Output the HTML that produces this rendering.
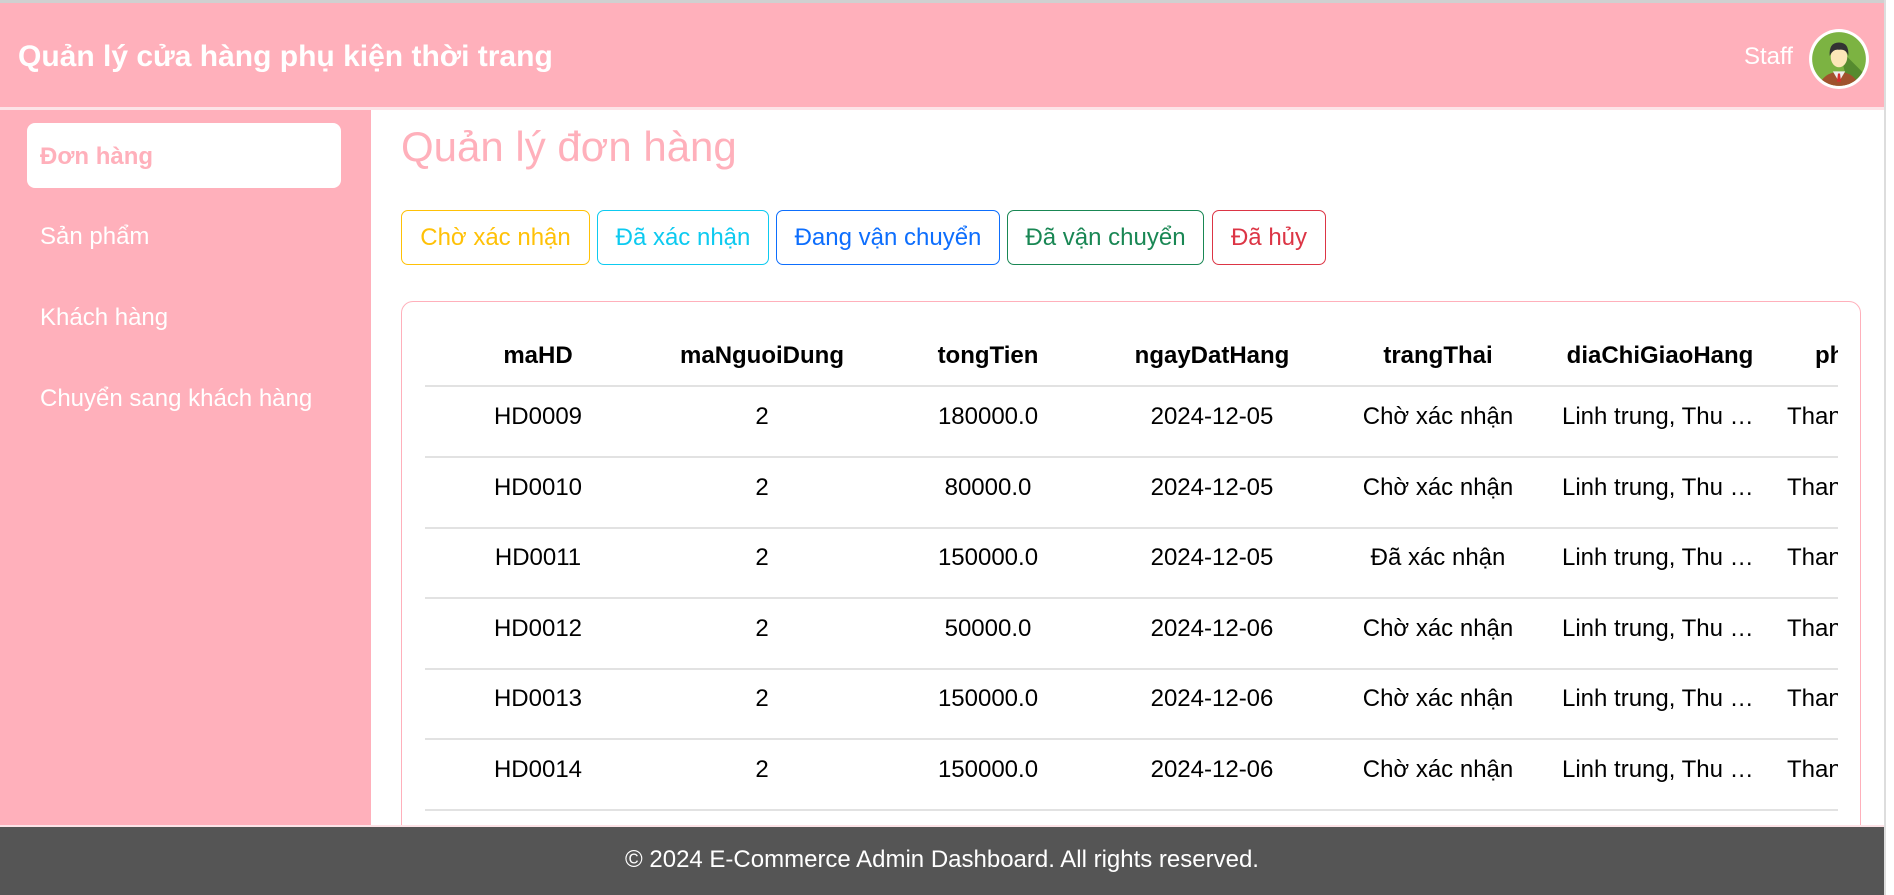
<!DOCTYPE html>
<html><head><meta charset="utf-8"><style>
*{margin:0;padding:0;box-sizing:border-box}
body{width:1894px;height:895px;overflow:hidden;font-family:"Liberation Sans",Arial,sans-serif;background:#fff;position:relative}
.hdr{position:absolute;left:0;top:0;width:1884px;height:107px;background:#ffb0bb;border-top:3px solid #d0d0d0}
.hdr h1{position:absolute;left:18px;top:36px;font-size:30px;color:#fff;font-weight:bold;line-height:36px}
.staff{position:absolute;left:1744px;top:40px;font-size:24px;color:#fff}
.av{position:absolute;left:1808px;top:25px}
.sep{position:absolute;left:0;top:107px;width:1884px;height:3px;background:#fde3e7}
.side{position:absolute;left:0;top:110px;width:371px;height:715px;background:#ffb0bb}
.act{position:absolute;left:27px;top:13px;width:314px;height:65px;background:#fff;border-radius:8px}
.si{position:absolute;left:40px;font-size:24px;color:#fff;line-height:28px}
.main-t{position:absolute;left:401px;top:122px;font-size:42px;color:#ffb0bb;line-height:50px}
.btn{position:absolute;top:210px;height:55px;border:1px solid;border-radius:7px;font-size:24px;text-align:center;line-height:53px;background:#fff}
.card{position:absolute;left:401px;top:301px;width:1460px;height:540px;border:1px solid #ffb0bb;border-radius:12px;overflow:hidden}
.tbl{position:absolute;left:23px;top:0;width:1413px;height:600px;overflow:hidden}
.row{position:absolute;left:0;width:1413px;height:71px;border-bottom:2px solid #e2e2e2}
.c{position:absolute;top:0;line-height:60px;font-size:24px;color:#000;text-align:center;white-space:nowrap}
.h .c{font-weight:bold;line-height:70px}
.foot{position:absolute;left:0;top:827px;width:1884px;height:68px;background:#555;color:#fff;font-size:24px;text-align:center;line-height:66px}
.pinkline{position:absolute;left:0;top:825px;width:1884px;height:2px;background:#fde3e7}
.rs{position:absolute;left:1884px;top:0;width:10px;height:895px;background:#fff;border-left:2px solid #ddd}
</style></head><body>
<div class="hdr"><h1>Quản lý cửa hàng phụ kiện thời trang</h1>
<div class="staff">Staff</div>
<svg class="av" width="62" height="62" viewBox="0 0 60 60"><defs><clipPath id="cp"><circle cx="30" cy="30" r="26"/></clipPath></defs>
<circle cx="30" cy="30" r="29" fill="#fff"/><circle cx="30" cy="30" r="26" fill="#7cb342"/>
<g clip-path="url(#cp)"><path d="M30 20 L60 50 L60 60 L40 60Z" fill="#558b2f"/>
<path d="M10 60 Q12 44 30 42 Q48 44 50 60Z" fill="#a0522d"/><path d="M24 42 L30 52 L36 42Z" fill="#eee"/><path d="M29 44 L31 44 L32 52 L28 52Z" fill="#d32f2f"/>
<ellipse cx="30" cy="28" rx="8" ry="10" fill="#fde7b8"/><path d="M21 27 Q20 14 30 14 Q40 14 39 27 Q37 20 30 21 Q24 20 21 27Z" fill="#333"/></g></svg>
</div>
<div class="sep"></div>
<div class="side"><div class="act"></div>
<div class="si" style="top:33px;color:#ffb0bb;font-weight:bold">Đơn hàng</div>
<div class="si" style="top:113px">Sản phẩm</div>
<div class="si" style="top:194px">Khách hàng</div>
<div class="si" style="top:275px">Chuyển sang khách hàng</div>
</div>
<div class="main-t">Quản lý đơn hàng</div>
<div class="btn" style="left:401px;width:189px;border-color:#ffc107;color:#ffc107">Chờ xác nhận</div>
<div class="btn" style="left:597px;width:172px;border-color:#0dcaf0;color:#0dcaf0">Đã xác nhận</div>
<div class="btn" style="left:776px;width:224px;border-color:#0d6efd;color:#0d6efd">Đang vận chuyển</div>
<div class="btn" style="left:1007px;width:197px;border-color:#198754;color:#198754">Đã vận chuyển</div>
<div class="btn" style="left:1212px;width:114px;border-color:#dc3545;color:#dc3545">Đã hủy</div>
<div class="card"><div class="tbl">
<div class="row h" style="top:19px;height:66px"><div class="c" style="left:0;width:226px">maHD</div><div class="c" style="left:224px;width:226px">maNguoiDung</div><div class="c" style="left:450px;width:226px">tongTien</div><div class="c" style="left:668px;width:238px">ngayDatHang</div><div class="c" style="left:914px;width:198px">trangThai</div><div class="c" style="left:1112px;width:246px">diaChiGiaoHang</div><div class="c" style="left:1390px;text-align:left">phuong</div></div>
</div></div>
<script>
var d=[["HD0009","180000.0","2024-12-05","Chờ xác nhận"],["HD0010","80000.0","2024-12-05","Chờ xác nhận"],["HD0011","150000.0","2024-12-05","Đã xác nhận"],["HD0012","50000.0","2024-12-06","Chờ xác nhận"],["HD0013","150000.0","2024-12-06","Chờ xác nhận"],["HD0014","150000.0","2024-12-06","Chờ xác nhận"]];
var t=document.querySelector('.tbl'),h='';
d.forEach(function(r,i){h+='<div class="row" style="top:'+(85+i*70.5)+'px"><div class="c" style="left:0;width:226px">'+r[0]+'</div><div class="c" style="left:224px;width:226px">2</div><div class="c" style="left:450px;width:226px">'+r[1]+'</div><div class="c" style="left:668px;width:238px">'+r[2]+'</div><div class="c" style="left:914px;width:198px">'+r[3]+'</div><div class="c" style="left:1137px;text-align:left">Linh trung, Thu …</div><div class="c" style="left:1362px;text-align:left">Thanh</div></div>'});
t.insertAdjacentHTML('beforeend',h);
</script>
<div class="pinkline"></div>
<div class="foot">© 2024 E-Commerce Admin Dashboard. All rights reserved.</div>
<div class="rs"></div>
</body></html>
